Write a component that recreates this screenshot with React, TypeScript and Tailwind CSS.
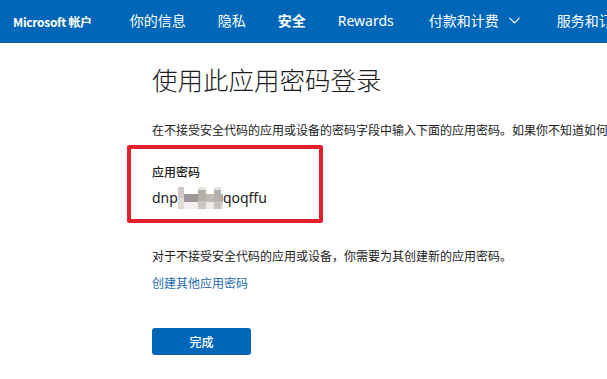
import React from "react";

const cjk = { fontFamily: '"Noto Sans CJK SC", "Noto Sans", sans-serif' };
const latin = { fontFamily: '"Noto Sans", "Noto Sans CJK SC", sans-serif' };

export default function App() {
  return (
    <div className="w-[607px] h-[379px] overflow-hidden bg-white text-[#1b1b1b]" style={cjk}>
      <header className="h-[43px] bg-[#0067b8] flex items-center text-white whitespace-nowrap">
        <div className="pl-[13px] text-[12px] font-bold tracking-[-0.3px]" style={cjk}>Microsoft 帐户</div>
        <div className="ml-[19px] w-px h-[23px] bg-white/70 -mt-[3px]" />
        <nav className="flex items-center ml-[19px] text-[14px] -mt-[3px]">
          <span>你的信息</span>
          <span className="ml-[32px]">隐私</span>
          <span className="ml-[32px] font-bold">安全</span>
          <span className="ml-[32px]" style={latin}>Rewards</span>
          <span className="ml-[35px] flex items-center gap-[10px]">
            付款和计费
            <svg width="11" height="7" viewBox="0 0 11 7" fill="none" stroke="white" strokeWidth="1.1">
              <path d="M0.5 0.8 L5.5 6 L10.5 0.8" />
            </svg>
          </span>
          <span className="ml-[37px]">服务和订阅</span>
        </nav>
      </header>

      <main className="pl-[152px] flex flex-col items-start whitespace-nowrap">
        <h1 className="mt-[20px] text-[25.5px] leading-[32px] font-light text-[#1b1b1b]">使用此应用密码登录</h1>
        <p className="mt-[27px] text-[12px] leading-[16px]">
          在不接受安全代码的应用或设备的密码字段中输入下面的应用密码。如果你不知道如何输入应用密码，请参阅帮助。
        </p>
        <div className="mt-[7px] -ml-[25px] w-[196px] h-[78px] border-4 border-[#e3202c] rounded-[2px] pl-[21px] pt-[15px]">
          <div className="text-[12px] leading-[16px] font-medium">应用密码</div>
          <div className="mt-[7px] flex items-center text-[14px] leading-[20px]" style={latin}>
            <span>dnp</span>
            <span className="flex h-[22px] items-stretch">
              <span className="w-[6px] flex flex-col"><span className="h-[11px] bg-[#cfcac8]" /><span className="h-[11px] bg-[#dcdbd8]" /></span>
              <span className="w-[14px] flex flex-col"><span className="h-[7px] bg-white" /><span className="h-[8px] bg-[#9f9797]" /><span className="h-[7px] bg-[#f1f0ef]" /></span>
              <span className="w-[8px] flex flex-col"><span className="h-[3px] bg-[#e6e4e1]" /><span className="h-[11px] bg-[#b3aea6]" /><span className="h-[8px] bg-[#c9c6bf]" /></span>
              <span className="w-[8px] flex flex-col"><span className="h-[7px] bg-white" /><span className="h-[8px] bg-[#bdbab8]" /><span className="h-[7px] bg-[#ecebea]" /></span>
              <span className="w-[7px] flex flex-col"><span className="h-[3px] bg-[#e4e2de]" /><span className="h-[11px] bg-[#b5b1aa]" /><span className="h-[8px] bg-[#c6c3bd]" /></span>
              <span className="w-[2px] flex flex-col"><span className="h-[7px] bg-white" /><span className="h-[8px] bg-[#aea7a6]" /><span className="h-[7px] bg-[#dedada]" /></span>
            </span>
            <span>qoqffu</span>
          </div>
        </div>
        <p className="mt-[25px] text-[12px] leading-[16px]">对于不接受安全代码的应用或设备，你需要为其创建新的应用密码。</p>
        <a className="mt-[11px] text-[12px] leading-[16px] text-[#1f6aae]">创建其他应用密码</a>
        <button className="mt-[37px] w-[99px] h-[27px] bg-[#0067b8] rounded-[3px] text-white text-[12px] font-medium flex items-center justify-center">
          完成
        </button>
      </main>
    </div>
  );
}
